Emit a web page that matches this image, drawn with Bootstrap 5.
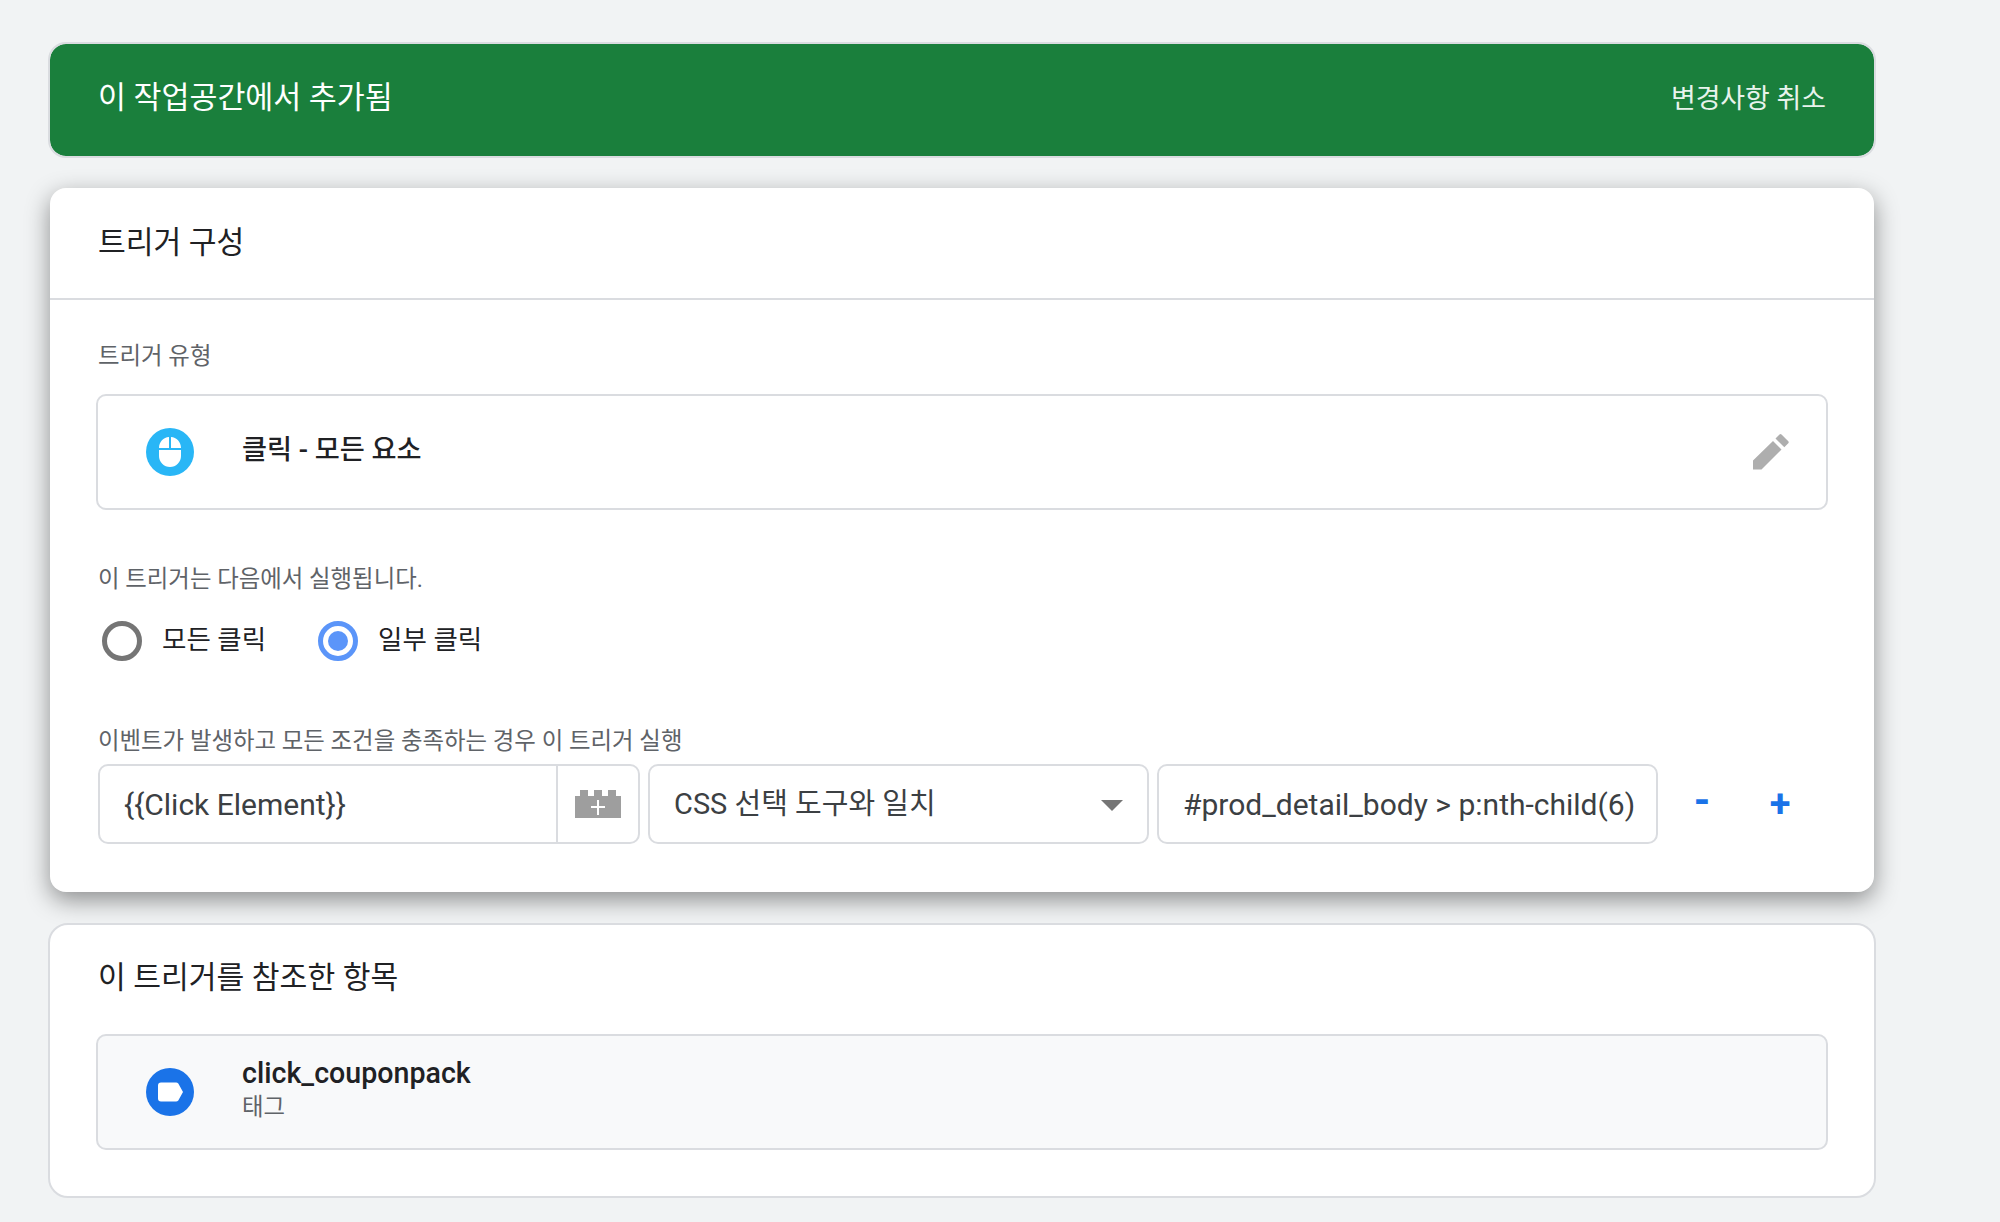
<!DOCTYPE html>
<html lang="ko">
<head>
<meta charset="utf-8">
<title>트리거 구성</title>
<link href="https://cdn.jsdelivr.net/npm/bootstrap@5.3.0/dist/css/bootstrap.min.css" rel="stylesheet">
<style>
html,body{height:100%;overflow:hidden}
body{background:#f1f3f4;font-family:Roboto,"Noto Sans CJK KR","Liberation Sans",sans-serif;color:#202124}
.page-wrap{width:1828px;margin-left:48px;padding-top:42px}
.banner{background:#1a7f3c;border:2px solid #dadce0;border-radius:18px;height:116px;color:#fff;padding:0 48px;margin-bottom:30px;background-clip:padding-box}
.banner-title{font-size:30.4px;line-height:36px;margin-top:-4px}
.banner-action{font-size:26.9px;line-height:32px;margin-top:-2px;color:#e8f3ec}
.panel{border:0;border-radius:16px;margin:0 2px;background:#fff;box-shadow:0 8px 24px rgba(0,0,0,.42);height:704px;margin-bottom:31px}
.panel-head{height:112px;border-bottom:2px solid #dadce0;padding:0 48px;font-size:30.2px;line-height:36px;padding-top:37px;color:#202124}
.panel-body{padding:0 46px}
.field-label{font-size:23.4px;line-height:28px;color:#5f6368;padding-left:2px}
.label-type{padding-top:42px}
.label-runs{margin-top:55px}
.label-cond{margin-top:66px}
.type-box{height:116px;border:2px solid #dadce0;border-radius:10px;padding:0 48px;margin-top:24px}
.type-name{font-size:27.2px;line-height:34px;font-weight:500;margin-left:48px;margin-top:-4px}
.pencil{margin-right:-11px}
.radio-mark{width:40px;height:40px;border-radius:50%;border:5px solid #757575;background:#fff;display:block}
.radio-mark.on{border-color:#5b95f9;display:flex;align-items:center;justify-content:center}
.radio-mark.on::after{content:"";width:20px;height:20px;border-radius:50%;background:#5b95f9}
.radio-text{font-size:26.5px;line-height:34px;margin-left:20px;margin-top:-2px;color:#202124}
.radios{margin-top:28px;margin-left:6px;height:40px;gap:52px}
.cond-row{margin-top:9px;margin-left:2px;height:80px;gap:8px}
.cell{height:80px;border:2px solid #dadce0;border-radius:10px;background:#fff;font-size:30px;line-height:36px;color:#3c4043;padding:0 24px}
.cell-a{width:542px;padding:0}
.cell-a-text{flex:1;padding-left:24px;padding-top:2px}
.cell-a-btn{width:82px;height:100%;border-left:2px solid #dadce0}
.cell-b{width:501px;padding-right:24px;font-size:29px}
.cell-c{width:501px;white-space:nowrap;padding-top:2px}
.caret-mark{width:0;height:0;border-left:11px solid transparent;border-right:11px solid transparent;border-top:11px solid #757575;margin-top:2px}
.sign{line-height:36px;font-weight:700;color:#1a73e8;width:40px;text-align:center}
.sign-minus{font-size:42px;margin-left:16px;margin-top:-6px}
.sign-plus{font-size:38px;margin-left:30px}
.panel-plain{border:2px solid #dadce0;border-radius:20px;background:#fff;height:275px;padding:0 46px}
.plain-title{font-size:30.2px;line-height:36px;padding:35px 2px 0;color:#202124}
.ref-box{height:116px;border:2px solid #dadce0;border-radius:10px;background:#f8f9fa;padding:0 48px;margin-top:38px}
.ref-name{font-size:28.6px;line-height:32px;font-weight:500;color:#202124}
.ref-kind{font-size:23.4px;line-height:28px;color:#5f6368;margin-top:4px}
.ref-text{margin-left:48px;margin-top:-6px}
</style>
</head>
<body>
<main class="page-wrap">
  <section class="banner d-flex align-items-center justify-content-between">
    <div class="banner-title">이 작업공간에서 추가됨</div>
    <div class="banner-action">변경사항 취소</div>
  </section>

  <section class="panel">
    <div class="panel-head">트리거 구성</div>
    <div class="panel-body">
      <div class="field-label label-type">트리거 유형</div>
      <div class="type-box d-flex align-items-center">
        <svg width="48" height="48" viewBox="0 0 48 48" aria-hidden="true"><circle cx="24" cy="24" r="24" fill="#29b6f6"/><path d="M13 22h22v6a11 11 0 0 1-22 0zM13 20c0-6 4.500-10.700 10-11v11zM25 9c5.500.3 10 5 10 11H25z" fill="#fff"/></svg>
        <div class="type-name flex-grow-1">클릭 - 모든 요소</div>
        <svg class="pencil" width="36" height="36" viewBox="0 0 36 36" aria-hidden="true"><path d="M0 26.500 20 7l8.500 8.500L8.500 35.500H0zM22.500 4.500 26.500.5a1.500 1.500 0 0 1 2 0l6.800 6.800a1.500 1.500 0 0 1 0 2l-4 4z" fill="#aeaeae"/></svg>
      </div>
      <div class="field-label label-runs">이 트리거는 다음에서 실행됩니다.</div>
      <div class="radios d-flex align-items-center">
        <label class="d-flex align-items-center"><span class="radio-mark"></span><span class="radio-text">모든 클릭</span></label>
        <label class="d-flex align-items-center"><span class="radio-mark on"></span><span class="radio-text">일부 클릭</span></label>
      </div>
      <div class="field-label label-cond">이벤트가 발생하고 모든 조건을 충족하는 경우 이 트리거 실행</div>
      <div class="cond-row d-flex align-items-center">
        <div class="cell cell-a d-flex align-items-center">
          <div class="cell-a-text">{{Click Element}}</div>
          <div class="cell-a-btn d-flex align-items-center justify-content-center">
            <svg width="46" height="28" viewBox="0 0 46 28" aria-hidden="true"><path d="M0 28V6h5V0h8v6h6V0h8v6h6V0h8v6h5v22z" fill="#9e9e9e"/><path d="M22 10h2v6h6v2h-6v7h-2v-7h-6v-2h6z" fill="#fff"/></svg>
          </div>
        </div>
        <div class="cell cell-b d-flex align-items-center justify-content-between">
          <span>CSS 선택 도구와 일치</span><span class="caret-mark"></span>
        </div>
        <div class="cell cell-c d-flex align-items-center">#prod_detail_body &gt; p:nth-child(6)</div>
        <div class="sign sign-minus">-</div>
        <div class="sign sign-plus">+</div>
      </div>
    </div>
  </section>

  <section class="panel-plain">
    <div class="plain-title">이 트리거를 참조한 항목</div>
    <div class="ref-box d-flex align-items-center">
      <svg width="48" height="48" viewBox="0 0 48 48" aria-hidden="true"><circle cx="24" cy="24" r="24" fill="#1a73e8"/><path d="M15 14.500h15a3 3 0 0 1 2.300 1L37 24l-4.700 8.500a3 3 0 0 1-2.300 1H15a3 3 0 0 1-3-3V17.500a3 3 0 0 1 3-3z" fill="#fff"/></svg>
      <div class="ref-text">
        <div class="ref-name">click_couponpack</div>
        <div class="ref-kind">태그</div>
      </div>
    </div>
  </section>
</main>
<script src="https://cdn.jsdelivr.net/npm/bootstrap@5.3.0/dist/js/bootstrap.bundle.min.js"></script>
</body>
</html>
